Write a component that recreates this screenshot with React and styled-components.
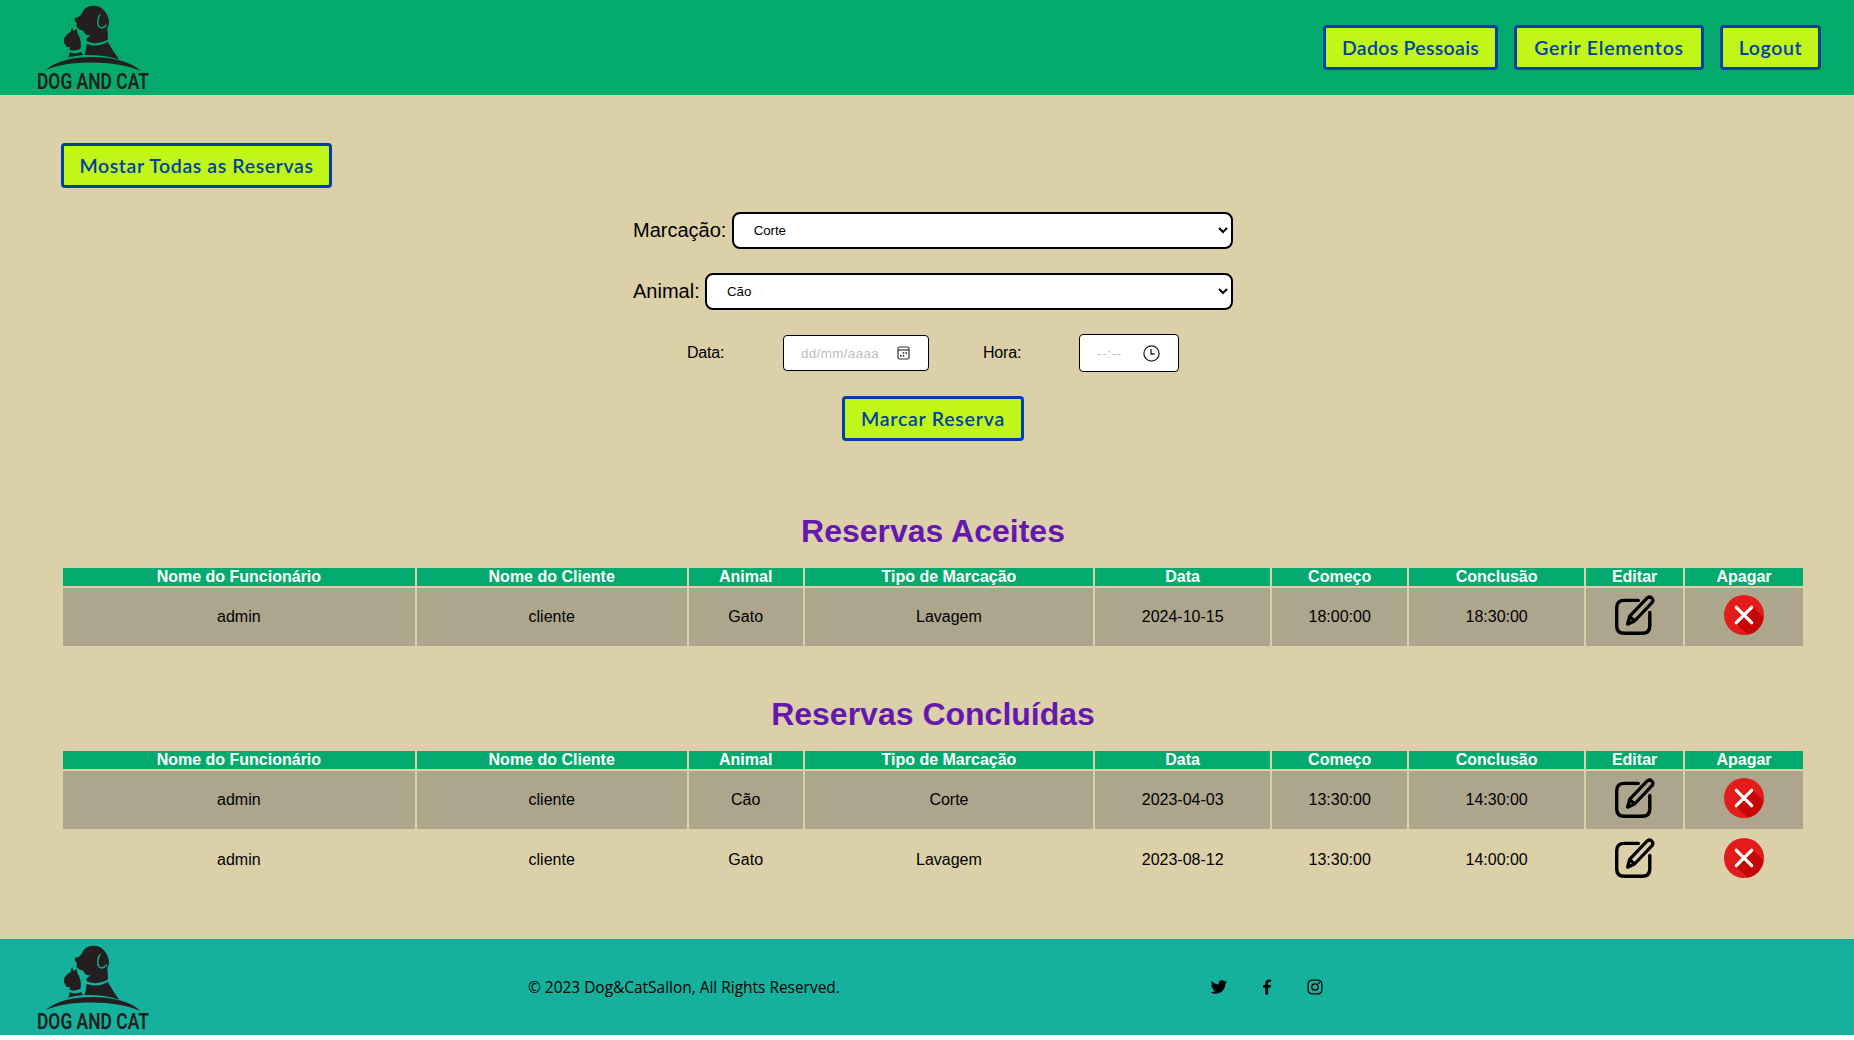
import React from "react";
import styled, { createGlobalStyle } from "styled-components";
import { BiLogoTwitter, BiLogoFacebook, BiLogoInstagram } from "react-icons/bi";

const GlobalStyle = createGlobalStyle`
  * { box-sizing: border-box; }
  body { margin: 0; background: #fff; font-family: "Liberation Sans", Arial, sans-serif; font-size: 16px; color: #000; }
`;

const Page = styled.div`
  display: flex;
  flex-direction: column;
  height: 1035px;
  background: #dcd0a9;
`;

const Header = styled.header`
  display: flex;
  align-items: flex-start;
  justify-content: space-between;
  height: 95px;
  padding: 0 33px 0 20px;
  background: #04aa6d;
`;

const Nav = styled.nav`
  display: flex;
  gap: 16px;
  padding-top: 25px;
`;

const Button = styled.button`
  flex: none;
  width: ${(p) => p.$width}px;
  height: 45px;
  padding: 0 0 1px;
  border: 3px solid #0340a0;
  border-radius: 4px;
  background: #c0f718;
  color: #0340a0;
  font-family: "Trebuchet MS", Lato, sans-serif;
  font-size: 19.5px;
  font-weight: 600;
  letter-spacing: ${(p) => p.$spacing || 0.3}px;
  white-space: nowrap;
`;

const Main = styled.main`
  flex: 1;
  display: flex;
  flex-direction: column;
  padding: 48px 49px 0 61px;
`;

const Form = styled.form`
  display: flex;
  flex-direction: column;
  align-items: center;
  width: 600px;
  margin: 24px auto 0;
`;

const Field = styled.label`
  display: flex;
  align-items: center;
  gap: 5.4px;
  width: 600px;
  height: 37px;
  margin-bottom: 24px;
  font-size: 20px;
`;

const Select = styled.select`
  flex: 1;
  height: 37px;
  padding: 0 0 0 16px;
  border: 2px solid #000;
  border-radius: 8px;
  background: #fff;
  color: #000;
  font-family: "Liberation Sans", Arial, sans-serif;
  font-size: 13.333px;
  letter-spacing: -0.1px;
`;

const DateTimeRow = styled.div`
  display: flex;
  align-items: center;
  width: 492px;
  height: 38px;
`;

const ShortLabel = styled.span`
  width: ${(p) => p.$width}px;
  letter-spacing: -0.2px;
`;

const Picker = styled.div`
  display: flex;
  align-items: center;
  justify-content: space-between;
  width: ${(p) => p.$width}px;
  height: ${(p) => p.$height}px;
  margin-right: ${(p) => p.$after || 0}px;
  padding: 0 ${(p) => p.$right}px 0 17px;
  border: 1px solid #000;
  border-radius: 4px;
  background: #fff;
  color: #bdbdbd;
  font-size: 13.333px;
  letter-spacing: ${(p) => p.$spacing}px;
`;

const Submit = styled.div`
  margin-top: 24px;
`;

const Section = styled.section`
  margin-top: ${(p) => p.$top}px;
`;

const Title = styled.h1`
  margin: 0 0 16px;
  color: #6418b0;
  font-size: 32px;
  line-height: 37px;
  text-align: center;
`;

const Table = styled.table`
  width: 1744px;
  border-collapse: separate;
  border-spacing: 2px;
  text-align: center;
  line-height: 18px;

  th { padding: 0; background: #04aa6d; color: #fff; }
  td { height: 58px; padding: 0; }
  tbody tr:nth-child(odd) td { background: #aea58d; }
`;

const IconCell = styled.span`
  display: block;
  height: 44px;
  svg { display: block; margin: 0 auto; }
`;

const Footer = styled.footer`
  display: flex;
  height: 96px;
  padding: 1px 0 0 20px;
  background: #15b19c;
`;

const Copyright = styled.p`
  width: 681px;
  margin: 36px 0 0 308px;
  font-family: "Segoe UI", "Open Sans", sans-serif;
  font-size: 15.45px;
  line-height: 22px;
`;

const Socials = styled.div`
  display: flex;
  gap: 28px;
  padding-top: 37px;
`;

const Brand = styled.div`
  height: 95px;
  svg { display: block; }
`;

const Logo = ({ gap }) => (
  <svg width="200" height="95" viewBox="0 0 600 285" fill="#231f20">
    <path d="M165 53 C176 53 184 45 188 35 C194 22 208 17 222 17 C239 17 251 27 258 39 C264 49 268 61 267 71 C265 79 260 84 263 94 L264 118 C246 130 221 134 201 124 C197 116 202 111 213 107 C200 107 192 101 191 93 C181 89 167 85 170 74 L171 69 C165 65 163 58 165 53 Z" />
    <path d="M241 43 C232 52 231 75 238 81 C246 87 254 82 260 74" fill="none" stroke={gap} strokeWidth="4" />
    <path d="M200 131 C221 140 243 138 263 125 L281 155 L298 179 C265 168 228 164 193 165 C197 156 199 143 200 131 Z" />
    <path d="M168 89 C181 104 187 128 189 163 C193 142 190 113 185 100 C181 91 175 87 168 89 Z" fill={gap} opacity="0.35" />
    <path d="M157 82 L161 94 L169 86 L173 101 C181 114 184 126 182 145 C172 153 160 153 149 149 L150 141 C141 144 136 139 137 134 C131 129 131 122 133 113 C139 106 145 98 153 95 C152 90 154 86 157 82 Z" />
    <path d="M148 157 C160 162 173 161 183 155 L189 165 C174 167 160 169 144 173 C148 168 150 163 148 157 Z" />
    <path d="M77 211 C130 157 308 158 362 213 C300 181 140 177 77 211 Z" />
    <text x="51" y="266" fontFamily="Roboto, sans-serif" fontWeight="600" fontSize="67" textLength="336" lengthAdjust="spacingAndGlyphs">DOG AND CAT</text>
  </svg>
);

const CalendarIcon = () => (
  <svg width="13" height="14" viewBox="0 0 13 14">
    <rect x="1" y="1" width="11" height="12" rx="1.5" fill="none" stroke="#333" strokeWidth="1.2" />
    <path d="M1 4H12" stroke="#333" strokeWidth="1.2" />
    <path d="M5.7 7h1.5M8.5 7H10M3 9.7h1.5M5.7 9.7h1.5" stroke="#222" strokeWidth="1.5" />
  </svg>
);

const ClockIcon = () => (
  <svg width="17" height="17" viewBox="0 0 17 17" fill="none" stroke="#222" strokeWidth="1.3">
    <circle cx="8.5" cy="8.5" r="7.6" />
    <path d="M8 4V9H11.5" />
  </svg>
);

const EditIcon = () => (
  <svg width="40" height="40" viewBox="0 0 40 40" fill="none" stroke="#000" strokeWidth="3.4" strokeLinecap="round" strokeLinejoin="round">
    <path d="M23.3 5.4H9.5Q1.7 5.4 1.7 13V31Q1.7 38.3 9.5 38.3H27Q34.8 38.3 34.8 31V17.5" />
    <path d="M14.6 21.3L32 3.2Q34.3 1 36.6 2.9Q39 5.3 37 7.7L19.6 26L12.6 29.2Z M14.6 21.3L19.6 26" strokeWidth="3.2" />
  </svg>
);

const DeleteIcon = () => (
  <svg width="40" height="40" viewBox="0 0 40 40">
    <circle cx="20" cy="20" r="20" fill="#e21b1b" />
    <path d="M28.5 11.5L39.4 22.4A20 20 0 0 1 24 39.6L11.5 28.3Z" fill="#c40606" />
    <path d="M12.3 12.3L27.7 27.7M27.7 12.3L12.3 27.7" stroke="#fff" strokeWidth="3.2" strokeLinecap="round" />
  </svg>
);

const columns = [
  "Nome do Funcionário",
  "Nome do Cliente",
  "Animal",
  "Tipo de Marcação",
  "Data",
  "Começo",
  "Conclusão",
  "Editar",
  "Apagar",
];

const accepted = [["admin", "cliente", "Gato", "Lavagem", "2024-10-15", "18:00:00", "18:30:00"]];
const finished = [
  ["admin", "cliente", "Cão", "Corte", "2023-04-03", "13:30:00", "14:30:00"],
  ["admin", "cliente", "Gato", "Lavagem", "2023-08-12", "13:30:00", "14:00:00"],
];

const Bookings = ({ rows }) => (
  <Table>
    <thead>
      <tr>{columns.map((name) => <th key={name}>{name}</th>)}</tr>
    </thead>
    <tbody>
      {rows.map((row, i) => (
        <tr key={i}>
          {row.map((cell, j) => <td key={j}>{cell}</td>)}
          <td><IconCell><EditIcon /></IconCell></td>
          <td><IconCell><DeleteIcon /></IconCell></td>
        </tr>
      ))}
    </tbody>
  </Table>
);

export default function App() {
  return (
    <>
      <GlobalStyle />
      <Page>
        <Header>
          <Brand><Logo gap="#04aa6d" /></Brand>
          <Nav>
            <Button $width={175}>Dados Pessoais</Button>
            <Button $width={190} $spacing={0.75}>Gerir Elementos</Button>
            <Button $width={101} $spacing={0.6}>Logout</Button>
          </Nav>
        </Header>
        <Main>
          <Button $width={271} $spacing={0.6}>Mostar Todas as Reservas</Button>
          <Form>
            <Field>
              Marcação:
              <Select defaultValue="Corte"><option>Corte</option><option>Lavagem</option></Select>
            </Field>
            <Field>
              Animal:
              <Select defaultValue="Cão"><option>Cão</option><option>Gato</option></Select>
            </Field>
            <DateTimeRow>
              <ShortLabel $width={96}>Data:</ShortLabel>
              <Picker $width={146} $height={36} $right={18} $after={54} $spacing={0.4}>dd/mm/aaaa<CalendarIcon /></Picker>
              <ShortLabel $width={96}>Hora:</ShortLabel>
              <Picker $width={100} $height={38} $right={18} $spacing={0.7}>--:--<ClockIcon /></Picker>
            </DateTimeRow>
            <Submit><Button type="button" $width={182} $spacing={0.75}>Marcar Reserva</Button></Submit>
          </Form>
          <Section $top={72}>
            <Title>Reservas Aceites</Title>
            <Bookings rows={accepted} />
          </Section>
          <Section $top={48}>
            <Title>Reservas Concluídas</Title>
            <Bookings rows={finished} />
          </Section>
        </Main>
        <Footer>
          <Brand><Logo gap="#15b19c" /></Brand>
          <Copyright>© 2023 Dog&amp;CatSallon, All Rights Reserved.</Copyright>
          <Socials>
            <BiLogoTwitter size={20} />
            <BiLogoFacebook size={20} />
            <BiLogoInstagram size={20} />
          </Socials>
        </Footer>
      </Page>
    </>
  );
}
